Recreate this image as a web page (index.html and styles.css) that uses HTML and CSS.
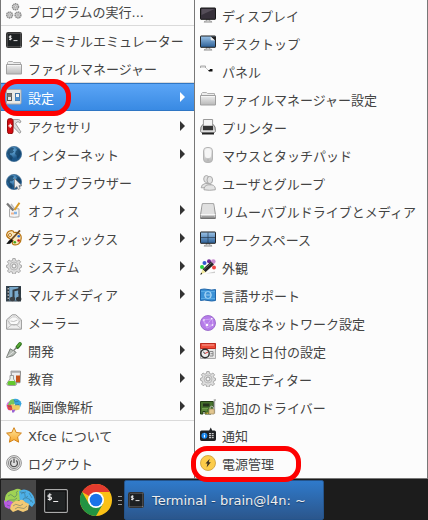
FILE: index.html
```html
<!DOCTYPE html>
<html lang="ja">
<head>
<meta charset="utf-8">
<title>デスクトップメニュー</title>
<link rel="stylesheet" href="styles.css">
</head>
<body>
<svg class="defs" width="0" height="0" aria-hidden="true">
  <defs>
    <linearGradient id="gray" x2="0" y2="1"><stop stop-color="#f0f0f0"/><stop offset="1" stop-color="#b8b8b8"/></linearGradient>
    <linearGradient id="blue" x2="0" y2="1"><stop stop-color="#9cc4e8"/><stop offset="1" stop-color="#2c5f96"/></linearGradient>
    <radialGradient id="globe" cx=".4" cy=".3"><stop stop-color="#6fb4e4"/><stop offset="1" stop-color="#1c5688"/></radialGradient>
    <linearGradient id="gold" x2="0" y2="1"><stop stop-color="#ffe9a0"/><stop offset="1" stop-color="#f7a52a"/></linearGradient>
    <symbol id="i-term" viewBox="0 0 16 16"><rect x=".5" y=".5" width="15" height="15" rx="1" fill="#aaa" stroke="#333"/><rect x="1.7" y="1.7" width="12.6" height="12.6" fill="#1d2022" stroke="#111" stroke-width=".5"/><path d="M5.6 4.2H4q-.9 0-.9.8t.9.8h.7q.9 0 .9.8t-.9.8H3M4.3 3.3v5M7.5 8.6h4" fill="none" stroke="#fff" stroke-width=".85"/></symbol>
    <symbol id="i-folder" viewBox="0 0 16 16"><path d="M1.5 5V2.5l1-1h4l1 1h7V5" fill="#ededed" stroke="#b0b0b0"/><path d="M.5 4.5h15V14H.5z" fill="url(#gray)" stroke="#a0a0a0"/><path d="M1 5.5h14" stroke="#f6f6f6"/></symbol>
    <symbol id="i-gear" viewBox="0 0 16 16"><path d="M6.8.5h2.4l.4 2 1.5.7 1.8-1.2 1.7 1.8-1.2 1.7.6 1.4 1.5.4v2l-1.5.5-.6 1.5 1.1 1.7-1.6 1.7-1.8-1.1-1.5.6-.4 2H6.8l-.4-2-1.5-.6-1.8 1.1L1.5 13l1.1-1.7L2 9.8.5 9.3v-2L2 6.9l.6-1.4-1.2-1.7L3.1 2l1.8 1.2 1.5-.7z" fill="#dcdcdc" stroke="#a3a3a3" stroke-width=".9"/><circle cx="8" cy="8" r="4" fill="none" stroke="#bbb"/><circle cx="8" cy="8" r="2" fill="#f5f5f5" stroke="#999"/></symbol>
    <symbol id="i-stand" viewBox="0 0 16 16"><path d="M6.5 12h3v2h1.7l.8 1.2H4L4.8 14h1.7z" fill="#ccc" stroke="#888" stroke-width=".6"/></symbol>
    <symbol id="i-globe" viewBox="0 0 16 16"><circle cx="8" cy="8" r="7.6" fill="url(#globe)" stroke="#35648c" stroke-width=".7"/><path d="M1 7 2.8 3l3-1.5L8 2.3 7 4.5l1.3 1L6 7.4 4.4 7l-.7 1.5 2 1 1.2 2-1.6 3-1.5-1.8L3 10zM10 2l3 1.5L15 7l-1.5 3.4-2 2.6-1-4-1.5-1 .8-3 1.7-1z" fill="#123d60" opacity=".7"/></symbol>
    <symbol id="i-brain" viewBox="0 0 32 25"><path d="M1 15q-1-4 5-5l4 3-1 6-3 2-4-2z" fill="#b75be0"/><path d="M2 10Q3 3 11 2q5-3 8 1l-1 9-8 2-5-2-3 2z" fill="#9fd254"/><path d="M16 3q5-3 10 0 6 4 6 12l-3 4-7-5-5 1z" fill="#4db0e8"/><path d="M8 17q3-5 8-4 3-3 6 1l4 2-1 6-5 2-5-2-5 2-3-3z" fill="#f2c974"/><path d="M5 8q3-3 5 0t4-2q-2-2 1-3M4 14q3-3 5-2t5-2M18 6q4-3 4 1t3 1M20 12q0-3 4-2t4 4M17 4q3 1 6 0M10 18q3-3 5-1t5-1M12 21q3-3 6-1t6-2M26 5l3 5M4 17l3 1M28 12l2 3" fill="none" stroke="#345d67" stroke-opacity=".55" stroke-width=".8"/></symbol>
  </defs>
</svg>
<div class="desktop">
  <div class="menus">
    <ul class="menu menu-main">
      <li class="item"><svg class="icon" viewBox="0 0 16 16"><g fill="#d4d4d4" stroke="#8c8c8c" stroke-width="1.5" stroke-dasharray="1.4 .5"><circle cx="9.5" cy="3.8" r="3"/><circle cx="3.6" cy="12" r="2.9"/><circle cx="12" cy="12" r="2.9"/></g><g fill="#fff" stroke="#999" stroke-width=".8"><circle cx="9.5" cy="3.8" r="1"/><circle cx="3.6" cy="12" r="1"/><circle cx="12" cy="12" r="1"/></g></svg><span>プログラムの実行...</span></li>
      <li class="sep"></li>
      <li class="item"><svg class="icon"><use href="#i-term"/></svg><span>ターミナルエミュレーター</span></li>
      <li class="item"><svg class="icon"><use href="#i-folder"/></svg><span>ファイルマネージャー</span></li>
      <li class="sep"></li>
      <li class="item active"><svg class="icon" viewBox="0 0 16 16"><rect x=".5" y=".5" width="14.5" height="14.5" rx="1" fill="#e9e9e6" stroke="#aaa"/><rect x="1.5" y="4.5" width="4" height="7" fill="#e4e4e4" stroke="#555"/><rect x="1.5" y="4.5" width="4" height="3.5" fill="#777"/><rect x="9.5" y="4.5" width="4" height="7" fill="#f3f3f3" stroke="#4276a8"/><rect x="9.5" y="8" width="4" height="3.5" fill="#4b90d2"/></svg><span>設定</span><i class="arrow"></i></li>
      <li class="sep clear"></li>
      <li class="item"><svg class="icon" viewBox="0 0 16 16"><path d="M7 1.5h5.5q2 .3 2.500 2.500l-1.500.7L12 3.500l-2.500 2 5.500 8.500-1.500 1.200L7.500 9z" fill="#ddd" stroke="#888" stroke-width=".8"/><rect x="1.500" y=".7" width="5.500" height="15" rx="2" fill="#d40c12" stroke="#8f0808"/><path d="M4.200 5.800v4M2.400 7.800H6" stroke="#fff" stroke-width="1.200"/></svg><span>アクセサリ</span><i class="arrow"></i></li>
      <li class="item"><svg class="icon"><use href="#i-globe"/></svg><span>インターネット</span><i class="arrow"></i></li>
      <li class="item"><svg class="icon" viewBox="0 0 16 16"><use href="#i-globe" width="16" height="16"/><path d="M8.500 4.500v10l2.400-2 1.300 3 2-1-1.300-2.800H16z" fill="#eee" stroke="#777" stroke-width=".7"/></svg><span>ウェブブラウザー</span></li>
      <li class="item"><svg class="icon" viewBox="0 0 16 16"><path d="M3.500 6.800h9.500v8q-4.700 1-9.500 0z" fill="#f5f5f5" stroke="#aaa"/><path d="M1 1.500 7.500 8.500" stroke="#777" stroke-width="2.300"/><path d="m5 2 4 5.500" stroke="#bbb" stroke-width="1.400"/><path d="M13.500.7 8.500 8" stroke="#d99a25" stroke-width="2"/><path d="M5 11.500h3" stroke="#f0b48e" stroke-width="2"/><path d="M8 11h3" stroke="#86b6e6" stroke-width="2.500"/></svg><span>オフィス</span><i class="arrow"></i></li>
      <li class="item"><svg class="icon" viewBox="0 0 16 16"><path d="M3 1.200q4-1.400 5 1.300 5-1 7 3.500 1 5-2.500 8-4 2-6-.2-.5-2 .5-3.200-1.500-1-2.700-1.500Q-.5 6.500 1 3.500 1.500 2 3 1.200z" fill="#fbe7bb" stroke="#b97616" stroke-width="1.200"/><circle cx="4" cy="5" r="1.500" fill="#fff" stroke="#b97616"/><circle cx="12.700" cy="6.200" r="1.300" fill="#2868d0"/><circle cx="12.600" cy="10.500" r="1.300" fill="#ce1919"/><circle cx="8.800" cy="12.300" r="1.300" fill="#42a418"/><path d="M14 .4 5 10" stroke="#6c4b25" stroke-width="1.800"/><path d="M5.500 9 3 10.500.3 14l3.800-.3L7 11z" fill="#111"/></svg><span>グラフィックス</span><i class="arrow"></i></li>
      <li class="item"><svg class="icon"><use href="#i-gear"/></svg><span>システム</span><i class="arrow"></i></li>
      <li class="item"><svg class="icon" viewBox="0 0 16 16"><rect x=".5" y=".5" width="14" height="14.500" fill="#79a9cb" stroke="#354551"/><path d="M2.200 1v14M13.500 1v7" stroke="#293137" stroke-width="2.200"/><path d="M2.200 2v13" stroke="#eee" stroke-dasharray="1.5 1.7"/><path d="M7.500 12V4.500l6-1.500v9" fill="none" stroke="#333c43" stroke-width="2"/><ellipse cx="6.500" cy="13" rx="2.700" ry="2.200" fill="#3b4145"/><ellipse cx="12.700" cy="13" rx="2.700" ry="2.200" fill="#30363a"/></svg><span>マルチメディア</span><i class="arrow"></i></li>
      <li class="item"><svg class="icon" viewBox="0 0 16 16"><path d="m.6 5.800 5.600-5h3.600l5.600 5v9.400H.6z" fill="#eee" stroke="#999"/><path d="M3 5.200 6.500 3h3L13 5.200V10l-5 1.500L3 10z" fill="#fafafa" stroke="#bbb" stroke-width=".7"/><path d="m1 14.500 5-4h4l5 4M1.500 6.500 5 10.500h6l3.500-4M4.500 7q3 1.500 7-1" fill="none" stroke="#b4b4b4" stroke-width=".8"/></svg><span>メーラー</span></li>
      <li class="item"><svg class="icon" viewBox="0 0 16 16"><path d="M14 2 11.500 5" stroke="#2d721a" stroke-width="3.600" stroke-linecap="round"/><path d="M13.900 1.800 11.700 4.500" stroke="#5dad3a" stroke-width="1.800" stroke-linecap="round"/><path d="m10.500 5.500-2.800 3" stroke="#777" stroke-width="1.200"/><path d="m4.200 6.800 6 3.500-3 3.300-6.700 1.900z" fill="#b5bbb5" stroke="#707670" stroke-width=".9"/><path d="m1.500 14.500 6.500-5" stroke="#eee" stroke-width=".8"/></svg><span>開発</span><i class="arrow"></i></li>
      <li class="item"><svg class="icon" viewBox="0 0 16 16"><path d="M5 1.200h9.500l-.5 11.500H6z" fill="#eee" stroke="#888"/><path d="M10 5.500h4v6.700h-4z" fill="#c6551b"/><path d="M5 2h9" stroke="#aaa" stroke-width="1.500"/><path d="M4 5.500h3.500V9l3 4.500q.3 1.700-1.500 2H2.300q-1.800-.5-1.500-2L4 9z" fill="#e9f2e9" stroke="#888" stroke-width=".8"/><path d="M2.500 11h6.200l1.300 3q-.2 1-1.500 1h-6q-1.200-.4-1-1.200z" fill="#64c82e"/></svg><span>教育</span><i class="arrow"></i></li>
      <li class="item"><svg class="icon" viewBox="0 0 16 16"><path d="M.5 8Q0 4.500 4 3l3 3v5l-4 1.500Q1 11 .5 8z" fill="#d96eea"/><path d="M3 4.500Q4 .5 8.500 1l1 4-3 2.500-5-.6z" fill="#78c65d"/><path d="M7.500 1q6-1 8 4.500l-1.500 4L9 7z" fill="#38a6de"/><path d="M1 7h7l1 3-4 2.500-3-1z" fill="#e54646"/><path d="m5 6 9 1.500-.5 4-4 1-3-1z" fill="#eecc62"/><path d="m6 12 3.500-.5L8 14.500H6z" fill="#9b63d2"/><path d="m8 2 1.500 2 3-1M9 7l4-.5M2 8l4 1" fill="none" stroke="#365d73" stroke-width=".5"/></svg><span>脳画像解析</span><i class="arrow"></i></li>
      <li class="sep"></li>
      <li class="item"><svg class="icon" viewBox="0 0 16 16"><path d="m8 .7 2.200 4.800 5.200.6-3.800 3.700 1 5.400L8 12.600l-4.600 2.600 1-5.400L.6 6.100l5.200-.6z" fill="url(#gold)" stroke="#d18117" stroke-linejoin="round"/></svg><span>Xfce について</span></li>
      <li class="item"><svg class="icon" viewBox="0 0 16 16"><circle cx="8" cy="8" r="7.400" fill="#e5e5e5" stroke="#888" stroke-width=".9"/><circle cx="8" cy="8" r="5.600" fill="#ddd" stroke="#777" stroke-width=".8"/><path d="M5.800 5.500a3.500 3.500 0 1 0 4.400 0M8 3.600V8" fill="none" stroke="#555" stroke-width="1.300"/></svg><span>ログアウト</span></li>
    </ul>
    <ul class="menu menu-sub">
      <li class="item"><svg class="icon" viewBox="0 0 16 16"><use href="#i-stand" width="16" height="16"/><rect x=".5" y="1" width="15" height="11.300" rx=".5" fill="#37313b" stroke="#161616"/><path d="M1.500 2h13L1.500 8z" fill="#554e59"/></svg><span>ディスプレイ</span></li>
      <li class="item"><svg class="icon" viewBox="0 0 16 16"><use href="#i-stand" width="16" height="16"/><rect x=".5" y="1" width="15" height="11.300" rx=".5" fill="url(#blue)" stroke="#222"/><path d="M10.500 1.500H15v4z" fill="#222"/><path d="m10.500 1.500.3 3.800 4.200.2z" fill="#eee"/></svg><span>デスクトップ</span></li>
      <li class="item"><svg class="icon" viewBox="0 0 16 16"><path d="M.5 5V3h5v2" fill="#ddd" stroke="#aaa"/><path d="m6 5 2 2" stroke="#ccc"/><path d="M8 7h1.500l.5-1h2.500v2.500H9z" fill="#111"/></svg><span>パネル</span></li>
      <li class="item"><svg class="icon"><use href="#i-folder"/></svg><span>ファイルマネージャー設定</span></li>
      <li class="item"><svg class="icon" viewBox="0 0 16 16"><path d="M1 8 2.800 5.500h10.400L15 8l.5 4.500-1.500 1H2l-1.500-1z" fill="#ccc" stroke="#777"/><path d="M3.400.5h9.200V7H3.400z" fill="#f3f3f3" stroke="#999"/><path d="M3 7h10v4.500H3z" fill="#333"/><path d="M.7 12h14.600" stroke="#eee"/><path d="M2 14.700h12" stroke="#222" stroke-width="1.600"/></svg><span>プリンター</span></li>
      <li class="item"><svg class="icon" viewBox="0 0 16 16"><rect x="3.500" y=".5" width="9" height="15" rx="3.500" fill="url(#gray)" stroke="#b4b4b4"/><rect x="5" y="2" width="6" height="9" rx="2" fill="#f5f5f5"/><circle cx="8" cy="13" r=".7" fill="#aaa"/></svg><span>マウスとタッチパッド</span></li>
      <li class="item"><svg class="icon" viewBox="0 0 16 16"><g fill="#e3e3e3" stroke="#999" stroke-width=".8"><ellipse cx="6.400" cy="4" rx="2.700" ry="3.500"/><path d="M1.200 12.800q0-3.500 4-4.300h4q3 1 3 4z"/><ellipse cx="9.800" cy="5" rx="2.800" ry="3.600"/><path d="M4 14.800q-.3-4 4-5h4q3.700 1 3.300 5-6 1-11.300 0z"/></g></svg><span>ユーザとグループ</span></li>
      <li class="item"><svg class="icon" viewBox="0 0 16 16"><path d="M2.300.7h11.400l1.800 11v3.500H.5v-3.500z" fill="url(#gray)" stroke="#999"/><path d="m3 1.400-1.500 9.800h13L13 1.400z" fill="#e0e0e0"/><path d="M.7 11.700h14.600" stroke="#fff"/><path d="M2 13.700h12" stroke="#999"/><path d="M.5 15.200h15" stroke="#555"/></svg><span>リムーバブルドライブとメディア</span></li>
      <li class="item"><svg class="icon" viewBox="0 0 16 16"><use href="#i-stand" width="16" height="16"/><rect x=".5" y="1" width="15" height="11.300" rx=".5" fill="url(#blue)" stroke="#222"/><path d="M8 1.500V12M1 6.500h14" stroke="#263c53" stroke-width=".7"/></svg><span>ワークスペース</span></li>
      <li class="item"><svg class="icon" viewBox="0 0 16 16"><circle cx="2" cy="8" r="2" fill="#23d43b"/><circle cx="4.500" cy="4" r="2" fill="#3159d0"/><circle cx="9" cy="2.200" r="2" fill="#6a2594"/><circle cx="13.300" cy="2.600" r="2.300" fill="#cb8fd2"/><circle cx="14" cy="8.500" r="2" fill="#f04545"/><path d="m6 14.500 9-2v1.500z" fill="#ccc"/><path d="M12.500 4 4 11.800" stroke="#222" stroke-width="4.200"/><path d="M12 3.300 4 10.500" stroke="#777" stroke-width=".8"/><path d="m2.700 10.300 3 3L.5 15.600z" fill="#efe69a"/><path d="m1.200 13.500 1 1.400-1.900.8z" fill="#111"/></svg><span>外観</span></li>
      <li class="item"><svg class="icon" viewBox="0 0 16 16"><path d="M.5 2.500q4-1 7.500 0t7.500 0v11q-4 1-7.500 0t-7.500 0z" fill="#3b91d6" stroke="#2166a9"/><path d="M1 4.500h14M1 11.500h14" stroke="#5aaae4"/><circle cx="8" cy="8" r="3.500" fill="none" stroke="#9ed3f6" stroke-width=".8"/><path d="M6 5q-1.500 3 0 6M10 5q1.500 3 0 6M6 8h4" stroke="#c3e4fb" stroke-width=".7" fill="none"/></svg><span>言語サポート</span></li>
      <li class="item"><svg class="icon" viewBox="0 0 16 16"><circle cx="8" cy="8" r="7.500" fill="#b67ce9" stroke="#9060c4" stroke-width=".8"/><path d="m3 5 4 5 5-7 1 7-6 3-4-8 8-1M7 10h6" fill="none" stroke="#e1c5fa" stroke-width=".5"/><g fill="#fff"><circle cx="4" cy="5" r=".8"/><circle cx="11.700" cy="3.700" r=".8"/><circle cx="7" cy="10" r="1.200"/><circle cx="12.500" cy="10" r=".8"/></g></svg><span>高度なネットワーク設定</span></li>
      <li class="item"><svg class="icon" viewBox="0 0 16 16"><path d="M.5.5h15v15H.5z" fill="#e5e5e5" stroke="#aaa"/><path d="M.5.5h15v5H.5z" fill="#ed4b37" stroke="#bd2c20"/><path d="M2 2h12" stroke="#f7a398"/><path d="M10 8.500h3v4.500h-3M10.500 10.700H13" fill="none" stroke="#888"/><circle cx="5" cy="10.500" r="4.200" fill="#ececec" stroke="#303030" stroke-width="1.400"/><path d="M5 10.500 8 9" stroke="#d33"/><path d="M5 10.500 3.300 9" stroke="#222"/></svg><span>時刻と日付の設定</span></li>
      <li class="item"><svg class="icon"><use href="#i-gear"/></svg><span>設定エディター</span></li>
      <li class="item"><svg class="icon" viewBox="0 0 16 16"><path d="M.5 2.500h12.800v10H11V15H5v-2.500H3V15H.5z" fill="#47722d" stroke="#243e16"/><path d="M13.700 1H16M14.500.5v14" stroke="#aaa" stroke-width="1.300" fill="none"/><path d="M3 4.500h6.500v3H3z" fill="#24321d"/><path d="M2 9.500h6M2 11h5" stroke="#87b65d" stroke-width=".7"/><path d="M5.500 14.300H10" stroke="#ddb03b" stroke-width="1.400" stroke-dasharray="1 .6"/><path d="M10 10V8.300q1.800-2.300 3.400 0V10" fill="none" stroke="#bbb"/><rect x="9" y="10" width="5.300" height="5" rx=".6" fill="#e2c68f" stroke="#9c8659" stroke-width=".7"/></svg><span>追加のドライバー</span></li>
      <li class="item"><svg class="icon" viewBox="0 0 16 16"><path d="M9.200 3.500 10.800.5l1.400 3h2.200q1.600 0 1.600 1.600v7.200q0 1.600-1.600 1.600H1.600Q0 13.900 0 12.300V5.100Q0 3.500 1.600 3.500z" fill="#202225"/><circle cx="4.400" cy="8.700" r="3" fill="#1684ec"/><path d="M4.400 8v2.400M4.400 6.400v.9" stroke="#fff" stroke-width="1.100"/><path d="M9 6.700h5M9 8.700h5M9 10.700h5" stroke="#eee" stroke-dasharray="2 .7"/></svg><span>通知</span></li>
      <li class="item"><svg class="icon" viewBox="0 0 16 16"><circle cx="8" cy="8" r="7.500" fill="#fccc4a" stroke="#c99b37" stroke-width=".8"/><path d="M9.700 3.700 5.500 8.600h2l-.9 3.800 4.200-5.100H8.700z" fill="#3a3022"/></svg><span>電源管理</span></li>
    </ul>
    <div class="mark mark-settings"></div>
    <div class="mark mark-power"></div>
  </div>
  <div class="panel">
    <div class="launcher start"><svg class="brain"><use href="#i-brain"/></svg></div>
    <div class="launcher shell"><svg viewBox="0 0 24 24"><rect x=".7" y=".7" width="22.600" height="22.600" rx="1" fill="#252829" stroke="#aaa" stroke-width="1.200"/><rect x="2" y="2" width="20" height="20" fill="#202324" stroke="#080808"/><path d="M7.500 5.700H5.300q-1.300 0-1.300 1.200T5.300 8h1q1.300 0 1.300 1.200t-1.300 1.200H3.800M5.800 4.300v7.500M9.200 12.500h5" fill="none" stroke="#eee" stroke-width="1.100"/></svg></div>
    <div class="launcher chrome"><svg viewBox="0 0 32 32"><circle cx="16" cy="16" r="16" fill="#fbc116"/><path d="M16 16 2.140 8A16 16 0 0 1 29.860 8H16z" fill="#e33b2e"/><path d="M2.140 8A16 16 0 0 0 16 32l6.930-12L16 16l-6.930 4z" fill="#229342"/><circle cx="16" cy="16" r="8" fill="#fff"/><circle cx="16" cy="16" r="6.300" fill="#1a73e8"/></svg></div>
    <div class="grip"><i></i><i></i><i></i></div>
    <div class="task"><svg class="icon"><use href="#i-term"/></svg><span>Terminal - brain@l4n: ~</span></div>
  </div>
</div>
</body>
</html>
```
FILE: styles.css
```css
* { box-sizing: border-box; }

body {
  margin: 0;
  background: #1c1c1c;
  font-family: "DejaVu Sans", "Noto Sans CJK JP", sans-serif;
  font-size: 13px;
  color: #444;
}

.defs { position: absolute; }

.desktop {
  display: flex;
  flex-direction: column;
  width: 428px;
  height: 520px;
  overflow: hidden;
}

.menus {
  position: relative;
  display: flex;
  height: 479px;
}

.menu {
  height: 479px;
  margin: 0;
  padding: 0;
  list-style: none;
  background: #fcfcfc;
  border: solid #777;
  border-width: 0 0 1px 1px;
}

.menu-main { width: 194px; }

.menu-sub {
  width: 234px;
  padding-top: 1px;
  border-right-width: 1px;
}

.item {
  display: flex;
  align-items: center;
  gap: 6px;
  height: 28px;
  padding: 0 9px 0 5px;
  line-height: 20px;
  white-space: nowrap;
}

.item > span { padding-top: 4px; }

.menu-main > .item:first-child { margin-top: -3px; }

.active {
  color: #fff;
  background: linear-gradient(#5ba5f6, #398ae3);
  border: solid #2f76c4;
  border-width: 1px 0;
}

.icon {
  flex: none;
  width: 16px;
  height: 16px;
}

.arrow {
  margin-left: auto;
  border: solid transparent;
  border-width: 5px 0 5px 5px;
  border-left-color: #333;
}

.active .arrow { border-left-color: #fff; }

.sep { height: 1px; background: #dadada; }
.sep.clear { background: transparent; }

.mark {
  position: absolute;
  z-index: 1;
  border: 5px solid #fe0000;
}

.mark-settings {
  left: 0;
  top: 79px;
  width: 71px;
  height: 37px;
  border-radius: 17px;
}

.mark-power {
  left: 191px;
  top: 446px;
  width: 110px;
  height: 36px;
  border-radius: 16px;
}

.panel {
  display: flex;
  align-items: stretch;
  height: 41px;
  padding: 1px 0 0 1px;
  background: #1c1c1c;
}

.launcher {
  display: flex;
  align-items: center;
  justify-content: center;
}

.start { width: 35px; background: #474747; }
.brain { width: 32px; height: 25px; }
.shell { width: 40px; padding-top: 2px; }
.shell svg { width: 24px; height: 24px; }
.chrome { width: 40px; }
.chrome svg { width: 32px; height: 32px; }

.grip {
  display: flex;
  flex-direction: column;
  justify-content: center;
  gap: 3px;
  width: 8px;
  padding-left: 2px;
}

.grip i { width: 4px; height: 1px; background: #999; }

.task {
  display: flex;
  align-items: center;
  gap: 8px;
  width: 200px;
  padding-left: 3px;
  color: #eee;
  background: linear-gradient(#2f7acb, #2b568c);
  border: 1px solid #24548c;
  border-radius: 2px;
  text-shadow: 0 1px 1px #1b3e68;
  white-space: nowrap;
}
```
